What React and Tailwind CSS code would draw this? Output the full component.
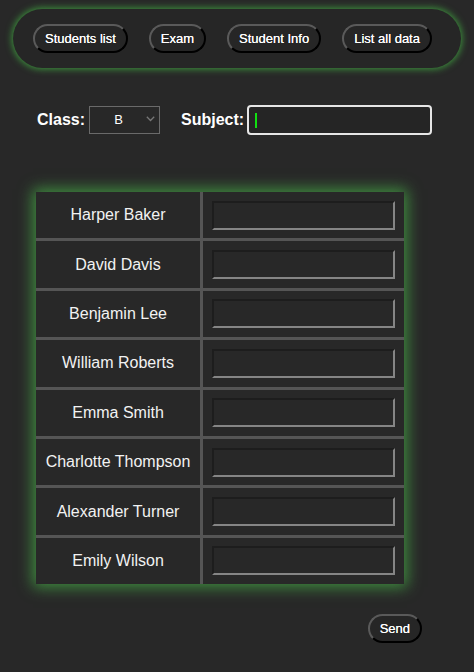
import { useState } from 'react';

const students = [
  'Harper Baker',
  'David Davis',
  'Benjamin Lee',
  'William Roberts',
  'Emma Smith',
  'Charlotte Thompson',
  'Alexander Turner',
  'Emily Wilson',
];

const pill =
  'rounded-full border-2 border-t-[#5a5a5a] border-l-[#5a5a5a] border-r-black border-b-black bg-[#262626] px-[10px] h-[29px] text-[13px] leading-none text-white [text-shadow:0_0_0.6px_#fff]';

export default function App() {
  const [cls, setCls] = useState('B');

  return (
    <div className="min-h-[672px] w-full bg-[#282828] pt-[9px] font-['Liberation_Sans',Arial,sans-serif] text-white">
      {/* Top nav */}
      <nav className="mx-[13px] flex h-[59px] items-center gap-[21px] rounded-full bg-[#262626] px-5 shadow-[0_0_7px_1px_rgba(70,190,70,0.75)]">
        <button className={pill}>Students list</button>
        <button className={pill}>Exam</button>
        <button className={pill}>Student Info</button>
        <button className={pill}>List all data</button>
      </nav>

      {/* Filters */}
      <div className="mt-[37px] flex h-[30px] items-center pl-[37px]">
        <label className="text-[16px] font-bold">Class:</label>
        <div className="relative ml-[4px] h-[28px] w-[71px]">
          <select
            value={cls}
            onChange={(e) => setCls(e.target.value)}
            className="h-full w-full appearance-none border border-[#6a6a6a] bg-[#282828] pr-[12px] text-center text-[13px] text-white outline-none [text-align-last:center]"
          >
            <option>A</option>
            <option>B</option>
            <option>C</option>
          </select>
          <svg
            className="pointer-events-none absolute right-[5px] top-[10px]"
            width="9"
            height="6"
            viewBox="0 0 9 6"
            fill="none"
            stroke="#777"
            strokeWidth="1.3"
          >
            <path d="M0.8 0.8 L4.5 4.5 L8.2 0.8" />
          </svg>
        </div>
        <label className="ml-[21px] text-[16px] font-bold">Subject:</label>
        <div className="relative ml-[3px] h-[30px] w-[185px]">
          <input
            type="text"
            className="h-full w-full rounded-[4px] border-2 border-[#e6e6e6] bg-[#252525] px-2 text-[13px] text-white caret-[#22dd22] outline-none"
          />
          <span className="pointer-events-none absolute left-[8px] top-[8px] h-[15px] w-[1.5px] bg-[#11e011]" />
        </div>
      </div>

      {/* Students table */}
      <div className="ml-[36px] mt-[57px] grid w-[368px] grid-cols-[164px_201px] gap-[3px] bg-[#555555] shadow-[0_0_14px_3px_rgba(70,170,70,0.8)]">
        {students.map((name) => (
          <div key={name} className="contents">
            <div className="flex h-[46.4px] items-center justify-center bg-[#282828] text-[16px] text-[#f2f2f2]">
              {name}
            </div>
            <div className="flex h-[46.4px] items-center bg-[#282828] pl-[9px]">
              <input
                type="text"
                className="h-[29px] w-[183px] border-2 border-t-[#1d1d1d] border-l-[#1d1d1d] border-r-[#858585] border-b-[#858585] bg-[#282828] px-1 text-[13px] text-white outline-none"
              />
            </div>
          </div>
        ))}
      </div>

      {/* Send */}
      <div className="mt-[30px] flex justify-end pr-[52px]">
        <button className={pill + ' h-[28px]'}>Send</button>
      </div>
    </div>
  );
}
